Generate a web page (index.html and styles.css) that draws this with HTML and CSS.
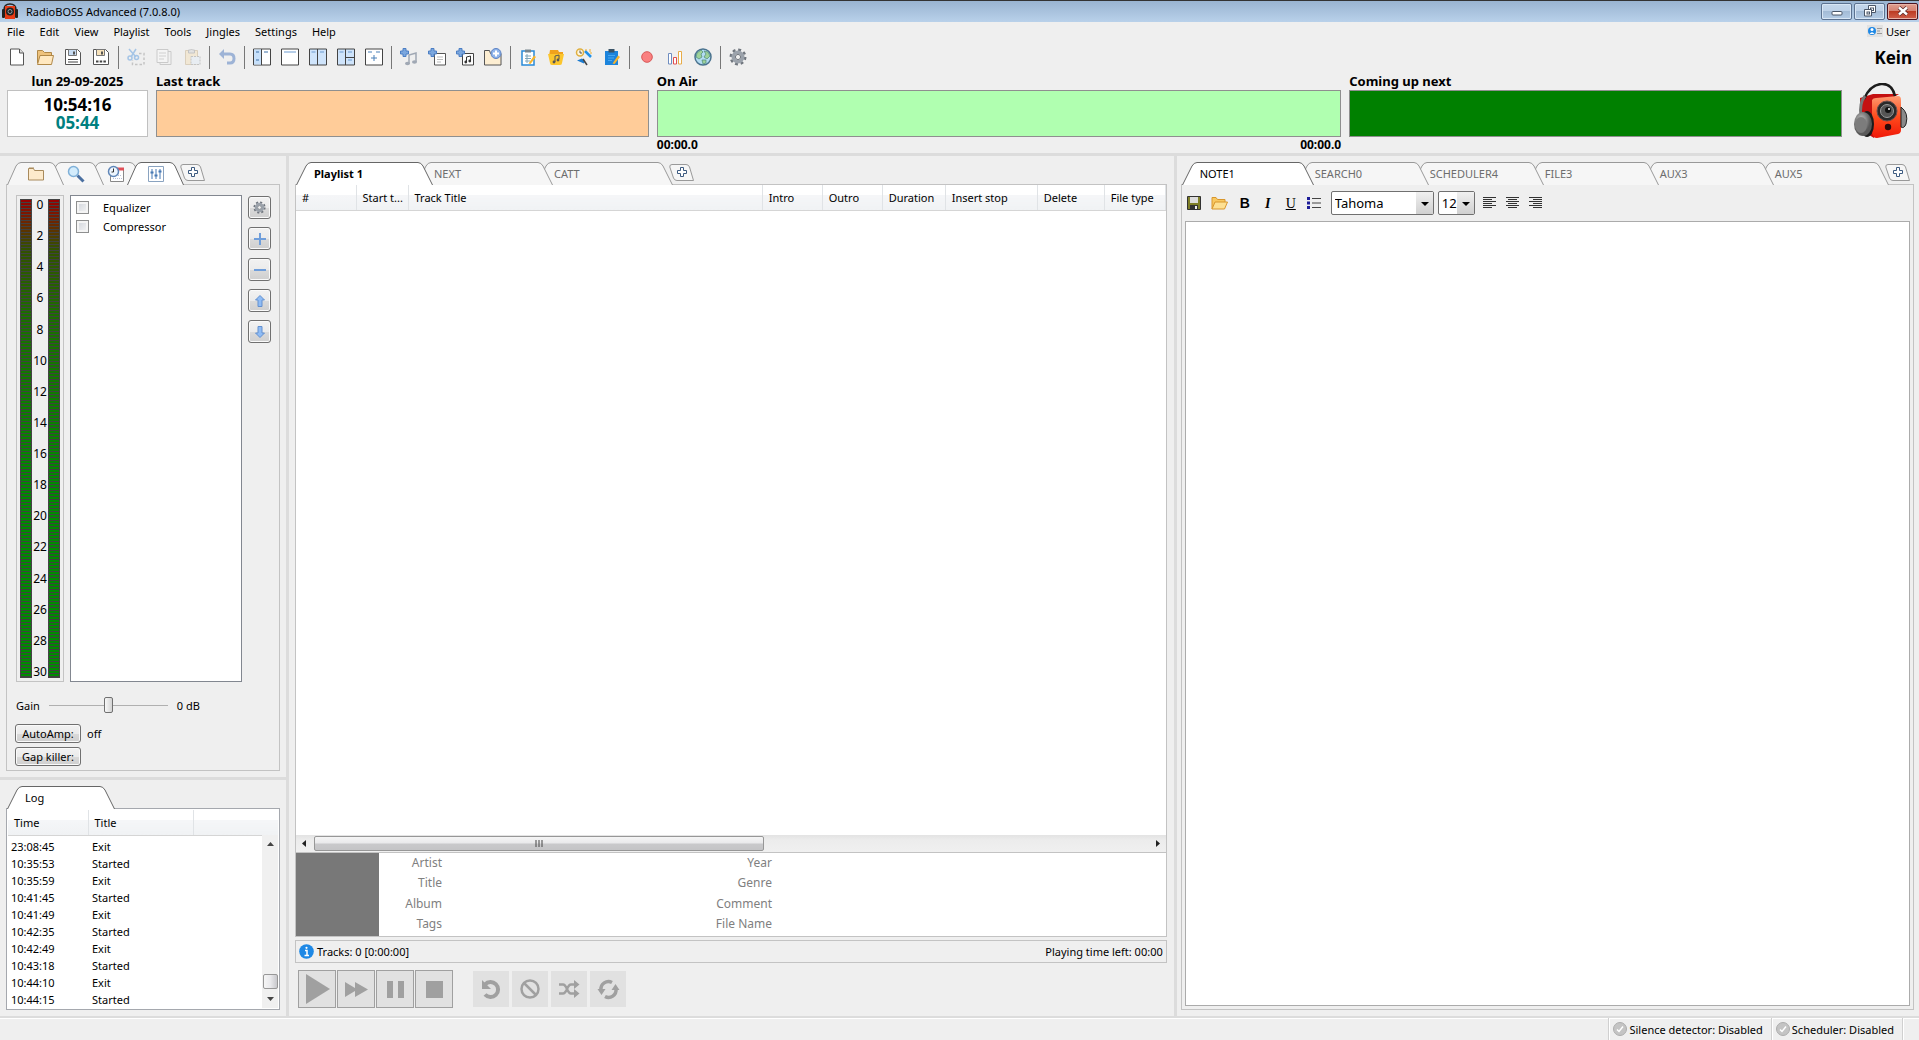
FILE: index.html
```
<!DOCTYPE html>
<html lang="en">
<head>
    <meta charset="UTF-8">
    <meta name="viewport" content="width=device-width, initial-scale=1.0">
    <title>RadioBOSS Advanced (7.0.8.0)</title>
    <link rel="stylesheet" href="styles.css">
</head>
<body>
    <!-- Shared shapes -->
    <svg class="defs" aria-hidden="true">
        <defs>
            <linearGradient id="redBox" x1="0" y1="0" x2="0" y2="1">
                <stop offset="0" stop-color="#ff9a70"/>
                <stop offset="0.5" stop-color="#ff4a1c"/>
                <stop offset="1" stop-color="#f01808"/>
            </linearGradient>
            <radialGradient id="cup" cx="0.4" cy="0.35">
                <stop offset="0" stop-color="#c8c8c8"/>
                <stop offset="1" stop-color="#5a5a5a"/>
            </radialGradient>
            <symbol id="tab-s" viewBox="0 0 57 23"><path d="M.5 23L9 4Q11 .5 14 .5H43Q46 .5 48 4L56.500 23"/></symbol>
            <symbol id="tab-m" viewBox="0 0 108 23"><path d="M.5 23L10 4Q12 .5 15 .5H93Q96 .5 98 4L107.500 23"/></symbol>
            <symbol id="tab-l" viewBox="0 0 132 23"><path d="M.5 23L10 4Q12 .5 15 .5H117Q120 .5 122 4L131.500 23"/></symbol>
            <symbol id="tab-xl" viewBox="0 0 137 23"><path d="M.5 23L10 4Q12 .5 15 .5H122Q125 .5 127 4L136.500 23"/></symbol>
            <symbol id="tab-add" viewBox="0 0 25 17">
                <path d="M3 .5H17Q19.500 .5 20.500 3L24.500 16.500H8Q5.500 16.500 4.500 14L.8 3Q.5 .5 3 .5Z" fill="#f6f6f6" stroke="#999"/>
                <path d="M11.500 3.500h3v3h3v3h-3v3h-3v-3h-3v-3h3z" fill="#fff" stroke="#3c5a80"/>
            </symbol>
            <symbol id="plus" viewBox="0 0 9 9"><path d="M3 .5h3v2.500h2.500v3H6v2.500H3V6H.5V3H3z" fill="#7ba7de" stroke="#4c7fc4"/></symbol>
            <symbol id="gear" viewBox="0 0 18 18">
                <circle cx="9" cy="9" r="7.200" fill="none" stroke="#70767e" stroke-width="2.500" stroke-dasharray="2.900 2.750"/>
                <circle cx="9" cy="9" r="4.700" fill="none" stroke="#9ba2ab" stroke-width="3.600"/>
                <circle cx="9" cy="9" r="2.600" fill="#efefef" stroke="#70767e"/>
            </symbol>
            <symbol id="check" viewBox="0 0 14 14">
                <circle cx="7" cy="7" r="6.500" fill="#c4c4c4" stroke="#adadad"/>
                <path d="M4 7.500l2 2 4-5" fill="none" stroke="#fff" stroke-width="1.500"/>
            </symbol>
        </defs>
    </svg>

    <header class="titlebar">
        <svg class="app-icon" viewBox="0 0 18 16">
            <path d="M3 7Q3 1 9 1T15 7" fill="none" stroke="#222" stroke-width="1.500"/>
            <rect x="4" y="3" width="10" height="13" fill="#e83c18"/>
            <circle cx="9" cy="8.500" r="4" fill="#222"/>
            <circle cx="9" cy="8.500" r="2" fill="none" stroke="#8d9aa5"/>
            <rect x="1" y="6" width="3" height="9" rx="1" fill="#222"/>
            <rect x="14" y="6" width="3" height="9" rx="1" fill="#222"/>
        </svg>
        <h1>RadioBOSS Advanced (7.0.8.0)</h1>
        <div class="window-buttons">
            <button aria-label="Minimize"><svg width="12" height="10" viewBox="0 0 12 10"><rect x="1" y="5.500" width="10" height="3.500" rx="1" fill="#fff" stroke="#4a5668"/></svg></button>
            <button aria-label="Restore"><svg width="12" height="12" viewBox="0 0 12 12" fill="#fff" stroke="#4a5668"><path d="M4.500 .5h7v7h-7z"/><rect x="6.500" y="3" width="3" height="2.500"/><path d="M.5 4.500h7v6.500h-7z"/><rect x="3" y="7" width="2.500" height="2"/></svg></button>
            <button class="close" aria-label="Close"><svg width="12" height="10" viewBox="0 0 12 10"><path d="M2 1.500l8 7M10 1.500l-8 7" stroke="#5a2a2a" stroke-width="4"/><path d="M2 1.500l8 7M10 1.500l-8 7" stroke="#fff" stroke-width="2.400"/></svg></button>
        </div>
    </header>

    <nav class="menubar">
        <a href="#">File</a>
        <a href="#">Edit</a>
        <a href="#">View</a>
        <a href="#">Playlist</a>
        <a href="#">Tools</a>
        <a href="#">Jingles</a>
        <a href="#">Settings</a>
        <a href="#">Help</a>
        <div class="user">
            <svg width="16" height="12" viewBox="0 0 16 12"><rect width="16" height="12" fill="#e2e2e2"/><circle cx="5" cy="6" r="4" fill="#1e88e5"/><circle cx="5" cy="4.500" r="1.500" fill="#fff"/><path d="M2.500 9Q5 5.500 7.500 9" fill="#fff"/><path d="M10 3.500h5M10 6h3M10 8.500h5" stroke="#999"/></svg>
            User
        </div>
    </nav>

    <div class="toolbar">
        <button aria-label="New"><svg viewBox="0 0 18 18"><path d="M2.500 1h9l4 4v12h-13z" fill="#fff" stroke="#555"/><path d="M11.500 1v4h4" fill="#ddd" stroke="#555"/></svg></button>
        <button aria-label="Open"><svg viewBox="0 0 18 18"><path d="M1.500 15V2.500h5l2 2h7V8" fill="#eec27c" stroke="#b08848"/><path d="M1.500 16.500L4 7.500h13.500l-2 9z" fill="#ffe8c0" stroke="#b08848"/></svg></button>
        <button aria-label="Save"><svg viewBox="0 0 18 18"><path d="M1.500 1.500h12l3 3v12h-15z" fill="#fff" stroke="#555"/><path d="M4.500 1.500h8v6h-8z" fill="#c7dcf3" stroke="#777"/><path d="M9 3.500h2v3H9z" fill="#555"/><path d="M4 11.500h10M4 14h10" stroke="#444"/></svg></button>
        <button aria-label="Save as"><svg viewBox="0 0 18 18"><path d="M1.500 1.500h12l3 3v12h-15z" fill="#fff" stroke="#555"/><path d="M4.500 1.500h8v6h-8z" fill="#f8e3bb" stroke="#777"/><path d="M9 3.500h2v3H9z" fill="#555"/><path d="M4 13.500h10" stroke="#444" stroke-width="2" stroke-dasharray="2.500 1.200"/></svg></button>
        <span class="sep"></span>
        <button aria-label="Cut" disabled><svg viewBox="0 0 18 18"><path d="M2 1l7 8M9 1L4 9" stroke="#1f78d8" stroke-width="1.500"/><circle cx="3" cy="10" r="2" fill="none" stroke="#1f78d8" stroke-width="1.500"/><circle cx="9.500" cy="9.500" r="2" fill="none" stroke="#1f78d8" stroke-width="1.500"/><path d="M12 5.500h5v11H5.500V12" fill="none" stroke="#777" stroke-width="1.500" stroke-dasharray="2.500 2"/></svg></button>
        <button aria-label="Copy" disabled><svg viewBox="0 0 18 18"><path d="M5 3.500h11v13H5z" fill="#f4f4f4" stroke="#888"/><path d="M2 1.500h11v13H2z" fill="#fff" stroke="#888"/><path d="M4 5h7M4 8h7M4 11h5" stroke="#999"/></svg></button>
        <button aria-label="Paste" disabled><svg viewBox="0 0 18 18"><path d="M2.500 2.500h12v14h-12z" fill="#f5d9a4" stroke="#b59460"/><path d="M5.500 5V2h2q1-2 2 0h2v3z" fill="#ccc" stroke="#777"/><path d="M8 8.500h9v8H8z" fill="#dcecfa" stroke="#777" stroke-dasharray="2 1"/></svg></button>
        <span class="sep"></span>
        <button aria-label="Undo"><svg viewBox="0 0 18 18"><path d="M3 6h9q4 0 4 4.500t-4 4.500h-3" fill="none" stroke="#9db3d6" stroke-width="3"/><path d="M6 1v10L1 6z" fill="#9db3d6"/></svg></button>
        <span class="sep"></span>
        <button aria-label="Left panel layout"><svg viewBox="0 0 18 18"><path d="M.5 1h17v16H.5z" fill="#fff" stroke="#444"/><path d="M1 1.500h7v15H1z" fill="#c7e0fa"/><path d="M8.500 1v16" stroke="#444"/><path d="M3 4h3M3 12h3M11 4h4" stroke="#3c70a8"/></svg></button>
        <button aria-label="Single layout"><svg viewBox="0 0 18 18"><path d="M.5 1h17v16H.5z" fill="#fff" stroke="#444"/><path d="M3 4h12" stroke="#6d9bd0"/></svg></button>
        <button aria-label="Two column layout"><svg viewBox="0 0 18 18"><path d="M.5 1h17v16H.5z" fill="#cfe4fb" stroke="#444"/><path d="M8.500 1v16" stroke="#444"/><path d="M2.500 4h4M11 4h4" stroke="#6d9bd0"/></svg></button>
        <button aria-label="Three panel layout"><svg viewBox="0 0 18 18"><path d="M.5 1h17v16H.5z" fill="#cfe4fb" stroke="#444"/><path d="M8.500 1v16M9 9.500h8" stroke="#444"/><path d="M2.500 4h4M11 4h4M11 12h4" stroke="#6d9bd0"/></svg></button>
        <button aria-label="Add layout"><svg viewBox="0 0 18 18"><path d="M.5 1h17v16H.5z" fill="#fff" stroke="#444"/><path d="M3 4h4M11 4h4M6 10h6M9 7v6" stroke="#4a80b8"/></svg></button>
        <span class="sep"></span>
        <button aria-label="Add track"><svg viewBox="0 0 18 18"><use href="#plus" width="9" height="9"/><path d="M9 16V7l7-2v9" fill="none" stroke="#a0a8b4" stroke-width="1.500"/><ellipse cx="7.500" cy="15.500" rx="2.500" ry="1.800" fill="#a0a8b4"/><ellipse cx="14.500" cy="14" rx="2.500" ry="1.800" fill="#a0a8b4"/></svg></button>
        <button aria-label="Add playlist"><svg viewBox="0 0 18 18"><path d="M6.500 5.500h11v11.500h-11z" fill="#fff" stroke="#555"/><path d="M9 9h6M9 11.500h6M9 14h4" stroke="#bbb"/><use href="#plus" width="9" height="9"/></svg></button>
        <button aria-label="Add music list"><svg viewBox="0 0 18 18"><path d="M6.500 5.500h11v11.500h-11z" fill="#fff" stroke="#444"/><path d="M10.500 14V9l4-1v5" fill="none" stroke="#333"/><circle cx="9.800" cy="14" r="1.400" fill="#333"/><circle cx="13.800" cy="13" r="1.400" fill="#333"/><use href="#plus" width="9" height="9"/></svg></button>
        <button aria-label="Add folder"><svg viewBox="0 0 18 18"><path d="M.5 17V2.500h5l1 3H17V17z" fill="#fdeed2" stroke="#555"/><circle cx="12" cy="5.500" r="5" fill="#8fb4ea" stroke="#5b82c4"/><path d="M9 5.500h6M12 2.500v6" stroke="#fff" stroke-width="2"/></svg></button>
        <span class="sep"></span>
        <button aria-label="Playlist generator"><svg viewBox="0 0 18 18"><path d="M3 3h12v14H3z" fill="#fff" stroke="#2a8bd8" stroke-width="1.500"/><path d="M6 1.500h6v3H6z" fill="#78868f"/><path d="M6 8h6M6 10.500h6M6 13h5M8 6v9" stroke="#7fa4b8"/><path d="M9.500 15.500l5.500-8 2 1.500-5.500 7z" fill="#f8b42c"/></svg></button>
        <button aria-label="Music library"><svg viewBox="0 0 18 18"><path d="M3 2h8l1 2h4v4H2z" fill="#f0a21c"/><path d="M1 6h16l-2 9q0 2-2 2H5q-2 0-2-2z" fill="#fcc62d"/><path d="M8 14V8l4-1v4" fill="none" stroke="#555"/><circle cx="7" cy="14" r="1.400" fill="#555"/><circle cx="11" cy="12" r="1.400" fill="#555"/></svg></button>
        <button aria-label="Track tools"><svg viewBox="0 0 18 18"><circle cx="5" cy="4.500" r="3.500" fill="#fff6dc" stroke="#e0b040" stroke-width="1.500"/><path d="M5 2.500v2.500h2" fill="none" stroke="#555"/><path d="M10 3l6 6" stroke="#2090e8" stroke-width="2.500"/><path d="M11 1v2M15 1v3M17 5h-2" stroke="#f0b030"/><path d="M2 12.500l5-2 3 3-1 2z" fill="#1d7cd0"/><path d="M8 11l4 6" stroke="#444" stroke-width="1.500"/></svg></button>
        <button aria-label="Event log"><svg viewBox="0 0 18 18"><path d="M2 3h13v14H2z" fill="#1c84dc"/><path d="M5.500 1h6v3.500h-6z" fill="#3a5468"/><path d="M5 7.500h7M5 10h6M5 12.500h4" stroke="#4aa8f0"/><path d="M9.500 15.500l5.500-8 2 1.500-5.500 7z" fill="#f8b42c"/></svg></button>
        <span class="sep"></span>
        <button aria-label="Record"><svg viewBox="0 0 18 18"><circle cx="9" cy="9" r="5.300" fill="#fa8080" stroke="#d85858"/></svg></button>
        <button aria-label="Statistics"><svg viewBox="0 0 18 18" fill="#fff"><path d="M2.500 5.500h3v10.500h-3z" stroke="#6f8dc0"/><path d="M7.500 9.500h3v6.500h-3z" stroke="#e05050"/><path d="M12.500 3.500h3v12.500h-3z" stroke="#e8ac48"/></svg></button>
        <button aria-label="Web"><svg viewBox="0 0 18 18"><circle cx="9" cy="9" r="8" fill="#b3dcf2" stroke="#4a728e" stroke-width="1.500"/><path d="M3 5l4-3 2 2-2 2 1 3-3 2-3-2zM10 3l4 1 2 4-3 3-3-2 2-3zM8 12l4 0 0 3-3 1z" fill="#9ed29a" stroke="#4d8a78" stroke-width=".7"/></svg></button>
        <span class="sep"></span>
        <button aria-label="Settings"><svg><use href="#gear"/></svg></button>
        <strong class="station">Kein</strong>
    </div>

    <section class="onair">
        <div class="clock">
            <h2>lun 29-09-2025</h2>
            <div class="clock-box">
                <time>10:54:16</time>
                <time class="left">05:44</time>
            </div>
        </div>
        <div class="deck last">
            <h2>Last track</h2>
            <div class="deck-box"></div>
        </div>
        <div class="deck current">
            <h2>On Air</h2>
            <div class="deck-box"></div>
            <div class="deck-times"><span>00:00.0</span><span>00:00.0</span></div>
        </div>
        <div class="deck next">
            <h2>Coming up next</h2>
            <div class="deck-box"></div>
        </div>
        <svg class="logo" viewBox="0 0 56 56">
            <path d="M7 15L20 11 46 11 38 16 21 55 8 47z" fill="#c41010"/>
            <path d="M19 17Q20 15 23 15L45 13Q48 13 48 17V47Q48 50 45 51L24 55Q20 55 19 50z" fill="url(#redBox)"/>
            <path d="M11 16Q17 2 28 1T42 13" fill="none" stroke="#1c1c1c" stroke-width="2.500"/>
            <path d="M8 34Q6 20 12 13" fill="none" stroke="#777" stroke-width="3"/>
            <circle cx="34" cy="28" r="10" fill="#2a2a2a" stroke="#6b5050"/>
            <circle cx="34" cy="28" r="6.500" fill="#555" stroke="#999"/>
            <circle cx="35" cy="27" r="3" fill="#111"/>
            <circle cx="36" cy="26" r="1" fill="#fff"/>
            <circle cx="35" cy="44" r="3.200" fill="#2a0a0a"/>
            <path d="M48 24Q56 30 53 41 51 46 48 44z" fill="#8a8a8a" stroke="#222"/>
            <ellipse cx="14" cy="41" rx="7" ry="13" fill="#1c1c1c"/>
            <ellipse cx="10" cy="41" rx="9" ry="12" fill="url(#cup)"/>
            <ellipse cx="8" cy="42" rx="6" ry="8" fill="#7c7c7c"/>
        </svg>
    </section>

    <main class="workspace">
        <div class="sidebar">
            <section class="effects">
                <div class="tabs icon-tabs">
                    <button class="tab" aria-label="Files"><svg class="shape"><use href="#tab-s"/></svg><svg class="glyph" viewBox="0 0 18 18"><path d="M1.500 15V3.500h5l1 2h9V15z" fill="#fdeacb" stroke="#a88a5c"/><path d="M2 3h5" stroke="#a88a5c"/></svg></button>
                    <button class="tab" aria-label="Search"><svg class="shape"><use href="#tab-s"/></svg><svg class="glyph" viewBox="0 0 18 18"><path d="M10.500 10.500l6 6" stroke="#4a6fa0" stroke-width="3"/><circle cx="6.500" cy="6.500" r="5" fill="#d3ecfc" stroke="#7fb0d8" stroke-width="1.500"/></svg></button>
                    <button class="tab" aria-label="Scheduler"><svg class="shape"><use href="#tab-s"/></svg><svg class="glyph" viewBox="0 0 18 18"><path d="M3.500 3.500h13v13h-13z" fill="#fff" stroke="#888"/><path d="M10 4h7" stroke="#e05058" stroke-width="3"/><path d="M6 13.500h9M9 10.500h6" stroke="#b8c0d8" stroke-dasharray="1 1"/><circle cx="6.500" cy="6.500" r="5" fill="#eef6fe" stroke="#5f86b8" stroke-width="1.500"/><path d="M6.500 3.500v3.500h-2" fill="none" stroke="#333"/></svg></button>
                    <button class="tab active" aria-label="Effects"><svg class="shape"><use href="#tab-s"/></svg><svg class="glyph" viewBox="0 0 18 18"><path d="M1.500 1.500h15v15h-15z" fill="#fff" stroke="#8aa3c0"/><path d="M5 4v10M9 4v10M13 4v10" stroke="#4679b4"/><path d="M3.500 6.500h3v2h-3zM7.500 9.500h3v2h-3zM11.500 5.500h3v2h-3z" fill="#4679b4"/></svg></button>
                    <button class="tab-add" aria-label="Add tab"><svg><use href="#tab-add"/></svg></button>
                </div>
                <div class="panel effects-panel">
                    <div class="effects-body">
                        <div class="meter">
                            <div class="bar"></div>
                            <div class="scale">
                                <span>0</span><span>2</span><span>4</span><span>6</span><span>8</span><span>10</span><span>12</span><span>14</span><span>16</span><span>18</span><span>20</span><span>22</span><span>24</span><span>26</span><span>28</span><span>30</span>
                            </div>
                            <div class="bar"></div>
                        </div>
                        <div class="effects-list">
                            <label><input type="checkbox"> Equalizer</label>
                            <label><input type="checkbox"> Compressor</label>
                        </div>
                        <div class="effects-buttons">
                            <button class="btn" aria-label="Configure"><svg width="13" height="13"><use href="#gear"/></svg></button>
                            <button class="btn" aria-label="Add"><svg width="14" height="14" viewBox="0 0 14 14"><path d="M1 7h12M7 1v12" stroke="#6f9edb" stroke-width="2"/></svg></button>
                            <button class="btn" aria-label="Remove"><svg width="14" height="14" viewBox="0 0 14 14"><path d="M1 7h12" stroke="#6f9edb" stroke-width="2"/></svg></button>
                            <button class="btn" aria-label="Move up"><svg width="12" height="14" viewBox="0 0 12 14"><path d="M6 1.500l4.500 4.500H8v6.500H4V6H1.500z" fill="#8fbcf5" stroke="#6390cf"/></svg></button>
                            <button class="btn" aria-label="Move down"><svg width="12" height="14" viewBox="0 0 12 14"><path d="M6 12.500L1.500 8H4V1.500h4V8h2.500z" fill="#8fbcf5" stroke="#6390cf"/></svg></button>
                        </div>
                    </div>
                    <div class="gain">
                        <label for="gain">Gain</label>
                        <input type="range" id="gain" min="-10" max="10" value="0">
                        <span>0 dB</span>
                    </div>
                    <div class="amp-row"><button class="btn wide">AutoAmp:</button><span>off</span></div>
                    <div class="amp-row"><button class="btn wide">Gap killer:</button></div>
                </div>
            </section>

            <section class="log">
                <div class="tabs">
                    <button class="tab medium active"><svg class="shape"><use href="#tab-m"/></svg><span>Log</span></button>
                </div>
                <div class="log-panel">
                    <table class="log-table">
                        <thead>
                            <tr><th>Time</th><th>Title</th><th></th></tr>
                        </thead>
                        <tbody>
                            <tr><td>23:08:45</td><td>Exit</td><td></td></tr>
                            <tr><td>10:35:53</td><td>Started</td><td></td></tr>
                            <tr><td>10:35:59</td><td>Exit</td><td></td></tr>
                            <tr><td>10:41:45</td><td>Started</td><td></td></tr>
                            <tr><td>10:41:49</td><td>Exit</td><td></td></tr>
                            <tr><td>10:42:35</td><td>Started</td><td></td></tr>
                            <tr><td>10:42:49</td><td>Exit</td><td></td></tr>
                            <tr><td>10:43:18</td><td>Started</td><td></td></tr>
                            <tr><td>10:44:10</td><td>Exit</td><td></td></tr>
                            <tr><td>10:44:15</td><td>Started</td><td></td></tr>
                        </tbody>
                    </table>
                    <div class="vscroll">
                        <svg width="7" height="4" viewBox="0 0 7 4"><path d="M0 4L3.500 0 7 4z" fill="#444"/></svg>
                        <div class="vthumb"></div>
                        <svg width="7" height="4" viewBox="0 0 7 4"><path d="M0 0L3.500 4 7 0z" fill="#444"/></svg>
                    </div>
                </div>
            </section>
        </div>

        <section class="playlist">
            <div class="tabs">
                <button class="tab xlarge active"><svg class="shape"><use href="#tab-xl"/></svg><strong>Playlist 1</strong></button>
                <button class="tab xlarge"><svg class="shape"><use href="#tab-xl"/></svg><span>NEXT</span></button>
                <button class="tab xlarge"><svg class="shape"><use href="#tab-xl"/></svg><span>CATT</span></button>
                <button class="tab-add" aria-label="Add tab"><svg><use href="#tab-add"/></svg></button>
            </div>
            <div class="playlist-view">
                <div class="playlist-list">
                    <table class="playlist-table">
                        <colgroup>
                            <col class="col-num"><col class="col-start"><col><col class="col-time"><col class="col-time"><col class="col-duration"><col class="col-stop"><col class="col-delete"><col class="col-type">
                        </colgroup>
                        <thead>
                            <tr><th>#</th><th>Start t...</th><th>Track Title</th><th>Intro</th><th>Outro</th><th>Duration</th><th>Insert stop</th><th>Delete</th><th>File type</th></tr>
                        </thead>
                    </table>
                </div>
                <div class="hscroll">
                    <svg width="4" height="7" viewBox="0 0 4 7"><path d="M4 0L0 3.500 4 7z" fill="#222"/></svg>
                    <div class="htrack">
                        <div class="hthumb"><svg width="8" height="7" viewBox="0 0 8 7"><path d="M1 0v7M4 0v7M7 0v7" stroke="#444"/></svg></div>
                    </div>
                    <svg width="4" height="7" viewBox="0 0 4 7"><path d="M0 0L4 3.500 0 7z" fill="#222"/></svg>
                </div>
                <div class="track-info">
                    <div class="cover"></div>
                    <div class="tags">
                        <span>Artist</span><span>Year</span>
                        <span>Title</span><span>Genre</span>
                        <span>Album</span><span>Comment</span>
                        <span>Tags</span><span>File Name</span>
                    </div>
                </div>
            </div>
            <div class="summary">
                <svg width="15" height="15" viewBox="0 0 15 15"><circle cx="7.500" cy="7.500" r="7.300" fill="#1e88e5"/><path d="M6 6.500h2v4.500M5.500 11.500h4.500" fill="none" stroke="#fff" stroke-width="1.500"/><circle cx="7.500" cy="3.800" r="1.100" fill="#fff"/></svg>
                <span>Tracks: 0 [0:00:00]</span>
                <span class="time-left">Playing time left: 00:00</span>
            </div>
            <div class="controls">
                <button aria-label="Play"><svg viewBox="0 0 36 36"><path d="M7 3l24 15L7 33z"/></svg></button>
                <button aria-label="Next"><svg viewBox="0 0 36 36"><path d="M7 11l10 6v-6l13 7.500L17 26v-6L7 26z"/></svg></button>
                <button aria-label="Pause"><svg viewBox="0 0 36 36"><path d="M10 10h6v17h-6zM21 10h6v17h-6z"/></svg></button>
                <button aria-label="Stop"><svg viewBox="0 0 36 36"><path d="M10 10h17v17H10z"/></svg></button>
                <button class="flat first" aria-label="Repeat track"><svg viewBox="0 0 36 36"><path d="M12 13.500A7.500 7.500 0 1 1 12 23.500" fill="none" stroke="#a0a0a0" stroke-width="4"/><path d="M9 9v9h9z"/></svg></button>
                <button class="flat" aria-label="Stop after current"><svg viewBox="0 0 36 36"><circle cx="18" cy="18" r="8.500" fill="none" stroke="#a0a0a0" stroke-width="2.500"/><path d="M12 12l12 12" stroke="#a0a0a0" stroke-width="2.500"/></svg></button>
                <button class="flat" aria-label="Shuffle"><svg viewBox="0 0 36 36"><path d="M8 13.500h4q2 0 4 4.500t4 4.500h4M8 22.500h4q2 0 4-4.500t4-4.500h4" fill="none" stroke="#a0a0a0" stroke-width="2.500"/><path d="M23 9l5.500 4.500L23 18zM23 18l5.500 4.500L23 27z"/></svg></button>
                <button class="flat" aria-label="Repeat playlist"><svg viewBox="0 0 36 36"><path d="M11 19A7.500 7.500 0 0 1 22 11.500M26 18A7.500 7.500 0 0 1 15 25.500" fill="none" stroke="#a0a0a0" stroke-width="3.500"/><path d="M7.500 18h8l-4 6zM21.500 19h8l-4-6z"/></svg></button>
            </div>
        </section>

        <section class="notes">
            <div class="tabs">
                <button class="tab large active"><svg class="shape"><use href="#tab-l"/></svg><span>NOTE1</span></button>
                <button class="tab large"><svg class="shape"><use href="#tab-l"/></svg><span>SEARCH0</span></button>
                <button class="tab large"><svg class="shape"><use href="#tab-l"/></svg><span>SCHEDULER4</span></button>
                <button class="tab large"><svg class="shape"><use href="#tab-l"/></svg><span>FILE3</span></button>
                <button class="tab large"><svg class="shape"><use href="#tab-l"/></svg><span>AUX3</span></button>
                <button class="tab large"><svg class="shape"><use href="#tab-l"/></svg><span>AUX5</span></button>
                <button class="tab-add" aria-label="Add tab"><svg><use href="#tab-add"/></svg></button>
            </div>
            <div class="panel notes-panel">
                <div class="notes-toolbar">
                    <button aria-label="Save note"><svg width="14" height="14" viewBox="0 0 14 14"><path d="M.5 .5h13v13H.5z" fill="#7f7f28" stroke="#333"/><path d="M3 1h8v6H3z" fill="#ddd"/><path d="M3 9h8v4.500H3z" fill="#333"/><path d="M8 10h2v3H8z" fill="#eee"/></svg></button>
                    <button class="open" aria-label="Open note"><svg width="17" height="14" viewBox="0 0 17 14"><path d="M1 13V1.500h4l1.500 2H14V6" fill="#f8c860" stroke="#d8962c"/><path d="M1 13L4 6h12.500l-3 7z" fill="#fde093" stroke="#d8962c"/></svg></button>
                    <button class="bold">B</button>
                    <button class="italic">I</button>
                    <button class="underline">U</button>
                    <button aria-label="Bullets"><svg width="14" height="12" viewBox="0 0 14 12"><path d="M0 1.500h3M0 6h3M0 10.500h3" stroke="#1c1c98" stroke-width="3"/><path d="M5 1.500h9M5 6h9M5 10.500h9" stroke="#444"/></svg></button>
                    <div class="combos">
                        <div class="combo font-name">
                            <select aria-label="Font"><option>Tahoma</option></select>
                            <svg width="8" height="4" viewBox="0 0 8 4"><path d="M0 0h8L4 4z"/></svg>
                        </div>
                        <div class="combo font-size">
                            <select aria-label="Font size"><option>12</option></select>
                            <svg width="8" height="4" viewBox="0 0 8 4"><path d="M0 0h8L4 4z"/></svg>
                        </div>
                    </div>
                    <button aria-label="Align left"><svg width="13" height="12" viewBox="0 0 13 12"><path d="M0 .5h13M0 2.500h9M0 4.500h13M0 6.500h9M0 8.500h13M0 10.500h9" stroke="#333"/></svg></button>
                    <button aria-label="Align center"><svg width="13" height="12" viewBox="0 0 13 12"><path d="M0 .5h13M2 2.500h9M0 4.500h13M2 6.500h9M0 8.500h13M2 10.500h9" stroke="#333"/></svg></button>
                    <button aria-label="Align right"><svg width="13" height="12" viewBox="0 0 13 12"><path d="M0 .5h13M4 2.500h9M0 4.500h13M4 6.500h9M0 8.500h13M4 10.500h9" stroke="#333"/></svg></button>
                </div>
                <textarea aria-label="Note"></textarea>
            </div>
        </section>
    </main>

    <footer class="statusbar">
        <div class="status-cell"><svg width="14" height="14"><use href="#check"/></svg>Silence detector: Disabled</div>
        <div class="status-cell"><svg width="14" height="14"><use href="#check"/></svg>Scheduler: Disabled</div>
        <div class="status-grip"></div>
    </footer>
</body>
</html>
```
FILE: styles.css
```
:root {
    --face: #efefef;
    --splitter: #dcdcdc;
    --border: #c3c3c3;
    --border-dark: #828790;
    --muted: #6d6d6d;
    --grey: #a0a0a0;
    --header-bg: linear-gradient(#fff 0, #fff 40%, #f5f6f8 42%, #f0f2f4 100%);
    --button-bg: linear-gradient(#f2f2f2 0, #ebebeb 50%, #dadada 52%, #cfcfcf 100%);
    --font-family: 'Noto Sans', 'Open Sans', sans-serif;
}

* {
    margin: 0;
    padding: 0;
    box-sizing: border-box;
}

body {
    min-height: 100vh;
    display: flex;
    flex-direction: column;
    background: var(--face);
    color: #000;
    font-family: var(--font-family);
    font-size: 11px;
    line-height: 17px;
    white-space: nowrap;
}

button,
input,
select,
textarea {
    font: inherit;
    color: inherit;
}

button {
    display: flex;
    align-items: center;
    justify-content: center;
    border: none;
    background: none;
}

a {
    color: inherit;
    text-decoration: none;
}

svg {
    display: block;
    flex: none;
}

.defs {
    position: absolute;
    width: 0;
    height: 0;
}

/* Title bar */
.titlebar {
    display: flex;
    align-items: center;
    height: 22px;
    padding: 0 1px 1px;
    border-top: 1px solid #333;
    background: linear-gradient(#99b4d1, #b9d1ea);
}

.app-icon {
    width: 18px;
    height: 16px;
    margin-right: 7px;
}

.titlebar h1 {
    font-size: 11px;
    font-weight: normal;
}

.window-buttons {
    display: flex;
    gap: 2px;
    margin-left: auto;
}

.window-buttons button {
    width: 31px;
    height: 17px;
    border: 1px solid #5c7290;
    border-radius: 2px;
    background: linear-gradient(#c4d6ea 0, #bdd1e8 48%, #a3bbd6 50%, #b4cce6 100%);
    box-shadow: inset 0 0 0 1px #d8e6f5;
}

.window-buttons .close {
    border-color: #4c1420;
    background: linear-gradient(#e0a090 0, #d48070 48%, #bc3c24 50%, #d0604c 100%);
    box-shadow: inset 0 0 0 1px #e8b4a8;
}

/* Menu */
.menubar {
    display: flex;
    align-items: center;
    gap: 15px;
    height: 18px;
    padding: 0 9px 0 7px;
}

.user {
    display: flex;
    align-items: center;
    gap: 3px;
    margin-left: auto;
}

/* Toolbar */
.toolbar {
    display: flex;
    align-items: center;
    height: 32px;
    padding: 2px 7px 0 3px;
}

.toolbar button {
    width: 28px;
    height: 24px;
}

.toolbar button svg {
    width: 18px;
    height: 18px;
}

.toolbar button:disabled svg {
    opacity: 0.35;
}

.sep {
    width: 1px;
    height: 23px;
    margin: 0 3px;
    background: #777;
}

.station {
    margin-left: auto;
    font-size: 17px;
}

/* Clock and decks */
.onair {
    display: flex;
    gap: 8px;
    height: 84px;
    padding-left: 7px;
    border-bottom: 3px solid var(--splitter);
}

.onair h2 {
    font-size: 13px;
    line-height: 18px;
}

.clock {
    width: 141px;
    text-align: center;
}

.clock-box,
.deck-box {
    height: 47px;
    border: 1px solid #8f8f8f;
}

.clock-box {
    display: flex;
    flex-direction: column;
    justify-content: center;
    border-color: #c0c0c0;
    background: #fff;
    font-size: 17px;
    font-weight: bold;
    line-height: 18px;
}

.clock-box .left {
    color: #008080;
}

.deck {
    flex: 18;
}

.deck.current {
    flex: 25;
}

.last .deck-box {
    background: #ffcc99;
}

.current .deck-box {
    background: #b0ffb0;
}

.next .deck-box {
    background: #008000;
}

.deck-times {
    display: flex;
    justify-content: space-between;
    font-size: 12px;
    font-weight: bold;
    line-height: 16px;
}

.logo {
    width: 56px;
    height: 56px;
    margin: 11px 10px 0 3px;
}

/* Workspace */
.workspace {
    flex: 1;
    display: grid;
    grid-template-columns: 286px 6fr 5fr;
}

/* Tabs */
.tabs {
    display: flex;
    position: relative;
    z-index: 1;
    height: 23px;
    margin: 0 0 -1px 1px;
}

.tab {
    position: relative;
    width: 57px;
    height: 23px;
    color: var(--muted);
}

.tab + .tab {
    margin-left: -17px;
}

.tab.medium {
    width: 108px;
}

.tab.large {
    width: 132px;
}

.tab.xlarge {
    width: 137px;
}

.tab.medium,
.tab.large,
.tab.xlarge {
    justify-content: flex-start;
    padding-left: 18px;
}

.tab .shape {
    position: absolute;
    inset: 0;
    width: 100%;
    height: 100%;
    fill: #f6f6f6;
    stroke: #999;
}

.tab .glyph,
.tab span,
.tab strong {
    position: relative;
}

.tab .glyph {
    width: 18px;
    height: 18px;
}

.tab:nth-child(1) { z-index: 6; }
.tab:nth-child(2) { z-index: 5; }
.tab:nth-child(3) { z-index: 4; }
.tab:nth-child(4) { z-index: 3; }
.tab:nth-child(5) { z-index: 2; }
.tab:nth-child(6) { z-index: 1; }

.tab.active {
    z-index: 7;
    color: #000;
}

.tab.active .shape {
    fill: #fff;
    stroke: #666;
}

.tab-add {
    align-self: flex-start;
    margin: 2px 0 0 -4px;
}

.tab-add svg {
    width: 25px;
    height: 17px;
}

.panel {
    border: 1px solid var(--border);
}

/* Sidebar */
.sidebar {
    display: flex;
    flex-direction: column;
}

.effects {
    flex: 1;
    display: flex;
    flex-direction: column;
    padding: 6px 6px 6px;
    border-bottom: 3px solid var(--splitter);
}

.effects-panel {
    flex: 1;
    display: flex;
    flex-direction: column;
    padding: 10px 8px 2px 9px;
}

.effects-body {
    flex: 1;
    display: flex;
    gap: 6px;
}

.meter {
    display: flex;
    width: 48px;
    padding: 3px;
    border: 1px solid var(--border);
}

.bar {
    width: 12px;
    border: 1px solid #444;
    background:
        repeating-linear-gradient(transparent 0 2px, #404040 2px 3px),
        linear-gradient(#960000 0, #6a2800 5%, #335000 10%, #1c6e00 24%, #008c00 60%);
}

.scale {
    flex: 1;
    display: flex;
    flex-direction: column;
    justify-content: space-between;
    text-align: center;
    font-size: 12px;
    line-height: 12px;
}

.effects-list {
    flex: 1;
    padding: 2px 5px;
    border: 1px solid var(--border-dark);
    background: #fff;
}

.effects-list label {
    display: flex;
    align-items: center;
    gap: 14px;
    height: 19px;
}

.effects-list input {
    appearance: none;
    width: 13px;
    height: 13px;
    border: 1px solid #8e8f8f;
    background: linear-gradient(135deg, #cfd3da, #f6f6f6);
    box-shadow: inset 0 0 0 2px #f4f4f4;
}

.effects-list input:checked {
    background: #4679b4;
}

.effects-buttons {
    display: flex;
    flex-direction: column;
    gap: 8px;
    padding-top: 1px;
}

.btn {
    width: 23px;
    height: 23px;
    border: 1px solid #707070;
    border-radius: 3px;
    background: var(--button-bg);
    box-shadow: inset 0 0 0 1px #fafafa;
}

.btn.wide {
    width: 66px;
    height: 19px;
}

.gain {
    display: flex;
    align-items: center;
    gap: 9px;
    height: 40px;
    padding-top: 6px;
}

.gain input {
    appearance: none;
    width: 119px;
    height: 16px;
    background: linear-gradient(#b0b0b0, #b0b0b0) no-repeat center / 100% 1px;
}

.gain input::-webkit-slider-thumb {
    appearance: none;
    width: 9px;
    height: 16px;
    border: 1px solid #707070;
    border-radius: 2px;
    background: linear-gradient(90deg, #f8f8f8, #d4d4d4);
}

.amp-row {
    display: flex;
    align-items: center;
    gap: 6px;
    height: 23px;
    margin-left: -1px;
}

/* Log */
.log {
    padding: 6px;
}

.log-panel {
    position: relative;
    height: 202px;
    padding: 1px;
    border: 1px solid #a5a8ae;
    background: #fff;
}

.log-table {
    width: 100%;
    border-collapse: collapse;
    table-layout: fixed;
}

th {
    height: 25px;
    padding: 0 6px;
    border-right: 1px solid #e0e3e6;
    border-bottom: 1px solid #d5d5d5;
    background: var(--header-bg);
    font-weight: normal;
    text-align: left;
}

.log-table th:nth-child(1) {
    width: 80px;
}

.log-table th:nth-child(2) {
    width: 105px;
}

.log-table th:last-child {
    border-right: none;
}

.log-table td {
    height: 17px;
    padding: 0 4px;
}

.log-table td:first-child {
    padding-left: 3px;
}

.log-table tbody::before {
    content: "";
    display: block;
    height: 2px;
}

.vscroll {
    position: absolute;
    top: 26px;
    right: 1px;
    bottom: 1px;
    display: flex;
    flex-direction: column;
    align-items: center;
    width: 16px;
    padding: 7px 0;
    background: #f0f0f0;
}

.vthumb {
    width: 15px;
    height: 15px;
    margin: auto 0 8px;
    border: 1px solid #979797;
    border-radius: 2px;
    background: linear-gradient(90deg, #f5f5f5, #e9e9ec 50%, #c8c8cc);
}

/* Playlist */
.playlist {
    display: flex;
    flex-direction: column;
    padding: 6px 7px 8px 6px;
    border: solid var(--splitter);
    border-width: 0 3px;
}

.playlist-view {
    flex: 1;
    display: flex;
    flex-direction: column;
    border: 1px solid var(--border);
    background: #fff;
}

.playlist-list {
    flex: 1;
}

.playlist-table {
    width: 100%;
    border-collapse: collapse;
    table-layout: fixed;
}

.col-num {
    width: 60px;
}

.col-start {
    width: 52px;
}

.col-time {
    width: 60px;
}

.col-duration {
    width: 63px;
}

.col-stop {
    width: 92px;
}

.col-delete {
    width: 67px;
}

.col-type {
    width: 61px;
}

.hscroll {
    display: flex;
    align-items: center;
    gap: 8px;
    height: 17px;
    padding: 0 6px;
    background: linear-gradient(#e3e3e3, #ececec 30%, #f0f0f0);
}

.htrack {
    flex: 1;
}

.hthumb {
    display: flex;
    align-items: center;
    justify-content: center;
    width: 54%;
    height: 15px;
    border: 1px solid #979797;
    border-radius: 2px;
    background: linear-gradient(#f5f5f5 0, #e9e9eb 48%, #c9c9cb 52%, #c4c4c6 100%);
}

.track-info {
    display: flex;
    height: 84px;
    border-top: 1px solid var(--border);
}

.cover {
    width: 83px;
    background: #787878;
}

.tags {
    display: grid;
    grid-template-columns: 63px 330px;
    align-content: space-between;
    padding: 1px 0 4px;
    color: #808080;
    font-size: 12px;
    text-align: right;
}

.summary {
    display: flex;
    align-items: center;
    gap: 3px;
    height: 23px;
    margin-top: 3px;
    padding: 0 3px;
    border: 1px solid var(--border);
}

.time-left {
    margin-left: auto;
}

.controls {
    display: flex;
    align-items: center;
    gap: 1px;
    margin-top: 7px;
    padding-left: 3px;
}

.controls button {
    width: 38px;
    height: 38px;
    border: 1px solid var(--grey);
    background: #e1e1e1;
}

.controls button.flat {
    width: 36px;
    height: 36px;
    margin-right: 2px;
    border: none;
}

.controls button.first {
    margin-left: 19px;
}

.controls svg {
    width: 36px;
    height: 36px;
    fill: var(--grey);
}

/* Notes */
.notes {
    display: flex;
    flex-direction: column;
    padding: 6px 5px 6px 4px;
}

.notes-panel {
    flex: 1;
    display: flex;
    flex-direction: column;
    padding: 0 3px 3px;
}

.notes-toolbar {
    display: flex;
    align-items: center;
    gap: 7px;
    height: 36px;
    padding-left: 1px;
}

.notes-toolbar button {
    width: 16px;
    height: 20px;
}

.notes-toolbar .open {
    width: 21px;
}

.notes-toolbar .bold,
.notes-toolbar .italic,
.notes-toolbar .underline {
    font-family: 'Liberation Serif', serif;
    font-size: 14px;
}

.notes-toolbar .bold {
    font-family: 'Liberation Sans', sans-serif;
    font-weight: bold;
}

.notes-toolbar .italic {
    font-style: italic;
    font-weight: bold;
}

.notes-toolbar .underline {
    text-decoration: underline;
}

.combos {
    display: flex;
    gap: 4px;
    padding-left: 2px;
}

.combo {
    position: relative;
    height: 24px;
    border: 1px solid #707070;
    border-radius: 2px;
    background: #fff;
}

.combo select {
    appearance: none;
    width: 100%;
    height: 22px;
    padding-left: 3px;
    border: none;
    background: linear-gradient(#f0f0f0, #d0d0d0) no-repeat right / 17px 100%;
    font-size: 13px;
}

.combo svg {
    position: absolute;
    top: 10px;
    right: 4px;
    pointer-events: none;
}

.font-name {
    width: 103px;
}

.font-size {
    width: 37px;
}

.notes-panel textarea {
    flex: 1;
    width: 100%;
    padding: 3px;
    border: 1px solid #ababab;
    background: #fff;
    font-size: 16px;
    line-height: 20px;
    outline: none;
    resize: none;
}

/* Status bar */
.statusbar {
    display: flex;
    justify-content: flex-end;
    height: 24px;
    border-top: 2px solid var(--splitter);
    box-shadow: inset 0 1px #fff;
}

.status-cell {
    display: flex;
    align-items: center;
    gap: 2px;
    padding: 0 8px 0 4px;
    border-left: 1px solid #d0d0d0;
    box-shadow: inset 1px 0 #fff;
}

.status-grip {
    width: 17px;
    border-left: 1px solid #d0d0d0;
    box-shadow: inset 1px 0 #fff;
}
```
